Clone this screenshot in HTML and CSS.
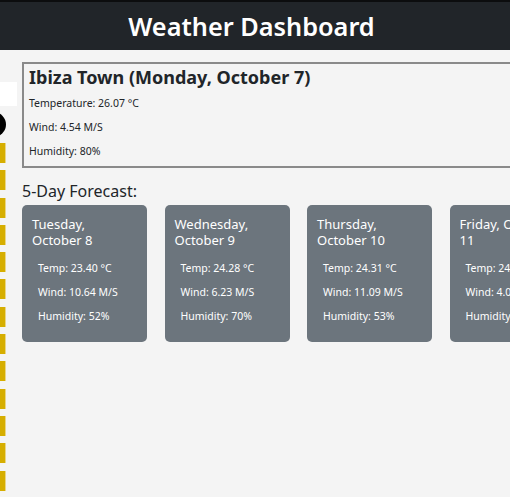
FILE: index.html
```html
<!DOCTYPE html>
<html lang="en">
<head>
<meta charset="utf-8">
<title>Weather Dashboard</title>
<link rel="stylesheet" href="styles.css">
</head>
<body>
<header class="topbar">
  <h1 class="topbar-title">Weather Dashboard</h1>
</header>
<div class="layout">
  <aside class="sidebar">
    <input class="city-input" type="text" aria-label="City">
    <button class="search-btn" aria-label="Search"></button>
    <div class="history">
      <button class="history-btn"></button>
      <button class="history-btn"></button>
      <button class="history-btn"></button>
      <button class="history-btn"></button>
      <button class="history-btn"></button>
      <button class="history-btn"></button>
      <button class="history-btn"></button>
      <button class="history-btn"></button>
      <button class="history-btn"></button>
      <button class="history-btn"></button>
      <button class="history-btn"></button>
      <button class="history-btn"></button>
      <button class="history-btn"></button>
    </div>
  </aside>
  <main class="content">
    <section class="current">
      <h2 class="current-title">Ibiza Town (Monday, October 7)</h2>
      <p class="current-stat">Temperature: 26.07 °C</p>
      <p class="current-stat">Wind: 4.54 M/S</p>
      <p class="current-stat">Humidity: 80%</p>
    </section>
    <h3 class="forecast-heading">5-Day Forecast:</h3>
    <div class="forecast">
      <div class="card">
        <h4 class="card-title">Tuesday, October 8</h4>
        <div class="card-stats">
          <p class="card-stat">Temp: 23.40 °C</p>
          <p class="card-stat">Wind: 10.64 M/S</p>
          <p class="card-stat">Humidity: 52%</p>
        </div>
      </div>
      <div class="card">
        <h4 class="card-title">Wednesday, October 9</h4>
        <div class="card-stats">
          <p class="card-stat">Temp: 24.28 °C</p>
          <p class="card-stat">Wind: 6.23 M/S</p>
          <p class="card-stat">Humidity: 70%</p>
        </div>
      </div>
      <div class="card">
        <h4 class="card-title">Thursday, October 10</h4>
        <div class="card-stats">
          <p class="card-stat">Temp: 24.31 °C</p>
          <p class="card-stat">Wind: 11.09 M/S</p>
          <p class="card-stat">Humidity: 53%</p>
        </div>
      </div>
      <div class="card">
        <h4 class="card-title">Friday, October 11</h4>
        <div class="card-stats">
          <p class="card-stat">Temp: 24.02 °C</p>
          <p class="card-stat">Wind: 4.05 M/S</p>
          <p class="card-stat">Humidity: 61%</p>
        </div>
      </div>
      <div class="card">
        <h4 class="card-title">Saturday, October 12</h4>
        <div class="card-stats">
          <p class="card-stat">Temp: 23.87 °C</p>
          <p class="card-stat">Wind: 5.12 M/S</p>
          <p class="card-stat">Humidity: 58%</p>
        </div>
      </div>
    </div>
  </main>
</div>
</body>
</html>
```
FILE: styles.css
```css
html, body {
  margin: 0;
  padding: 0;
}
body {
  background: #f4f4f4;
  color: #212529;
  font-family: "Noto Sans", "Open Sans", sans-serif;
  overflow: hidden;
}
.topbar {
  background: #212529;
  border-top: 2px solid #0c0d0e;
  height: 48px;
  display: flex;
  align-items: center;
  justify-content: center;
}
.topbar-title {
  margin: 0 0 0 -7px;
  color: #fff;
  font-size: 25.3px;
  font-weight: 600;
  line-height: 48px;
}
.layout {
  display: flex;
  align-items: flex-start;
  padding-top: 12px;
}
.sidebar {
  flex: 0 0 17px;
  width: 17px;
  margin-top: 20px;
  display: flex;
  flex-direction: column;
}
.city-input {
  box-sizing: border-box;
  width: 17px;
  height: 24px;
  border: none;
  background: #fff;
  padding: 0;
  margin: 0;
}
.search-btn {
  width: 25px;
  height: 25px;
  border: none;
  border-radius: 50%;
  background: #000;
  padding: 0;
  margin: 6px 0 0 -19px;
}
.history {
  margin-top: 6px;
  display: flex;
  flex-direction: column;
  gap: 7.3px;
}
.history-btn {
  box-sizing: border-box;
  width: 6px;
  height: 20px;
  padding: 0;
  border: none;
  border-right: 1px solid #ead685;
  background: #d6ae00;
}
.content {
  flex: 0 0 auto;
  width: 720px;
  margin-left: 5px;
}
.current {
  border: 2px solid #8a8a8a;
  padding: 0 5px 3px;
}
.current-title {
  margin: 0;
  font-size: 18px;
  font-weight: 700;
  line-height: 27px;
}
.current-stat {
  margin: 0;
  font-size: 10.5px;
  line-height: 24px;
}
.forecast-heading {
  margin: 12px 0 0;
  font-size: 16px;
  font-weight: 400;
  line-height: 22px;
}
.forecast {
  display: flex;
  gap: 17.5px;
  margin-top: 3px;
}
.card {
  flex: 0 0 125px;
  box-sizing: border-box;
  background: #6c757d;
  color: #fff;
  border-radius: 5px;
  padding: 11px 10px 14px;
}
.card-title {
  margin: 0;
  font-size: 13px;
  font-weight: 400;
  line-height: 16px;
}
.card-stats {
  margin-top: 8px;
  padding-left: 6px;
}
.card-stat {
  margin: 0;
  font-size: 10.5px;
  line-height: 24px;
}
```
